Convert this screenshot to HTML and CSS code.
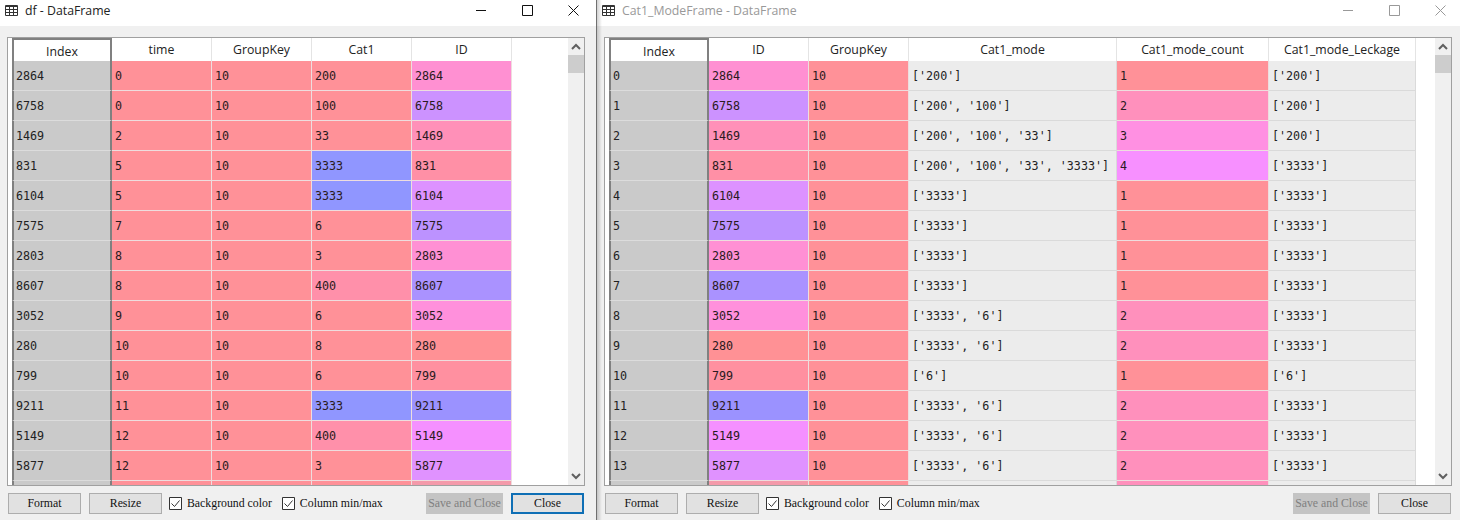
FILE: index.html
```html
<!DOCTYPE html>
<html lang="en">
<head>
    <meta charset="UTF-8">
    <title>DataFrame viewers</title>
    <link rel="stylesheet" href="styles.css">
</head>
<body>

    <div class="window window-df">
        <div class="titlebar">
            <svg class="app-icon" width="13" height="11" viewBox="0 0 13 11"><path d="M.5.5h12v10H.5zM.5 1.500h12M.5 4.500h12M.5 7.500h12M4.500 1v9M8.500 1v9" fill="none" stroke="#333"/></svg>
            <span class="title">df - DataFrame</span>
            <div class="controls">
                <span class="control"><svg width="10" height="10" viewBox="0 0 10 10"><path d="M0 5.500h10" stroke="currentColor"/></svg></span>
                <span class="control"><svg width="11" height="11" viewBox="0 0 11 11"><path d="M.5.5h10v10H.5z" fill="none" stroke="currentColor"/></svg></span>
                <span class="control"><svg width="11" height="11" viewBox="0 0 11 11"><path d="M.5.5l10 10M10.500.5l-10 10" fill="none" stroke="currentColor"/></svg></span>
            </div>
        </div>
        <div class="content">
            <div class="frame">
                <div class="grid">
                    <table>
                        <colgroup><col class="col-sm"><col class="col-sm"><col class="col-sm"><col class="col-sm"><col class="col-sm"></colgroup>
                        <thead><tr><th class="index">Index</th><th>time</th><th>GroupKey</th><th>Cat1</th><th>ID</th></tr></thead>
                        <tbody>
                            <tr><td class="index">2864</td><td class="red">0</td><td class="red">10</td><td class="red">200</td><td class="id-2864">2864</td></tr>
                            <tr><td class="index">6758</td><td class="red">0</td><td class="red">10</td><td class="red">100</td><td class="id-6758">6758</td></tr>
                            <tr><td class="index">1469</td><td class="red">2</td><td class="red">10</td><td class="red">33</td><td class="id-1469">1469</td></tr>
                            <tr><td class="index">831</td><td class="red">5</td><td class="red">10</td><td class="blue">3333</td><td class="id-831">831</td></tr>
                            <tr><td class="index">6104</td><td class="red">5</td><td class="red">10</td><td class="blue">3333</td><td class="id-6104">6104</td></tr>
                            <tr><td class="index">7575</td><td class="red">7</td><td class="red">10</td><td class="red">6</td><td class="id-7575">7575</td></tr>
                            <tr><td class="index">2803</td><td class="red">8</td><td class="red">10</td><td class="red">3</td><td class="id-2803">2803</td></tr>
                            <tr><td class="index">8607</td><td class="red">8</td><td class="red">10</td><td class="rose">400</td><td class="id-8607">8607</td></tr>
                            <tr><td class="index">3052</td><td class="red">9</td><td class="red">10</td><td class="red">6</td><td class="id-3052">3052</td></tr>
                            <tr><td class="index">280</td><td class="red">10</td><td class="red">10</td><td class="red">8</td><td class="id-280">280</td></tr>
                            <tr><td class="index">799</td><td class="red">10</td><td class="red">10</td><td class="red">6</td><td class="id-799">799</td></tr>
                            <tr><td class="index">9211</td><td class="red">11</td><td class="red">10</td><td class="blue">3333</td><td class="id-9211">9211</td></tr>
                            <tr><td class="index">5149</td><td class="red">12</td><td class="red">10</td><td class="rose">400</td><td class="id-5149">5149</td></tr>
                            <tr><td class="index">5877</td><td class="red">12</td><td class="red">10</td><td class="red">3</td><td class="id-5877">5877</td></tr>
                            <tr><td class="index"></td><td class="red"></td><td class="red"></td><td class="red"></td><td class="id-next"></td></tr>
                        </tbody>
                    </table>
                </div>
                <div class="scrollbar">
                    <svg width="16" height="17" viewBox="0 0 16 17"><path d="M4 11l4-4 4 4" fill="none" stroke="#606060" stroke-width="2"/></svg>
                    <div class="thumb"></div>
                    <svg class="arrow-down" width="16" height="17" viewBox="0 0 16 17"><path d="M4 6l4 4 4-4" fill="none" stroke="#606060" stroke-width="2"/></svg>
                </div>
            </div>
            <div class="actions">
                <button class="btn">Format</button>
                <button class="btn">Resize</button>
                <label class="check"><svg width="13" height="13" viewBox="0 0 13 13"><path d="M.5.5h12v12H.5z" fill="#fff" stroke="#333"/><path d="M2.500 6.500l3 3 5-6" fill="none" stroke="#333"/></svg>Background color</label>
                <label class="check"><svg width="13" height="13" viewBox="0 0 13 13"><path d="M.5.5h12v12H.5z" fill="#fff" stroke="#333"/><path d="M2.500 6.500l3 3 5-6" fill="none" stroke="#333"/></svg>Column min/max</label>
                <button class="btn btn-save" disabled>Save and Close</button>
                <button class="btn btn-focus">Close</button>
            </div>
        </div>
    </div>

    <div class="divider"></div>

    <div class="window window-mode">
        <div class="titlebar">
            <svg class="app-icon" width="13" height="11" viewBox="0 0 13 11"><path d="M.5.5h12v10H.5zM.5 1.500h12M.5 4.500h12M.5 7.500h12M4.500 1v9M8.500 1v9" fill="none" stroke="#333"/></svg>
            <span class="title">Cat1_ModeFrame - DataFrame</span>
            <div class="controls">
                <span class="control"><svg width="10" height="10" viewBox="0 0 10 10"><path d="M0 5.500h10" stroke="currentColor"/></svg></span>
                <span class="control"><svg width="11" height="11" viewBox="0 0 11 11"><path d="M.5.5h10v10H.5z" fill="none" stroke="currentColor"/></svg></span>
                <span class="control"><svg width="11" height="11" viewBox="0 0 11 11"><path d="M.5.5l10 10M10.500.5l-10 10" fill="none" stroke="currentColor"/></svg></span>
            </div>
        </div>
        <div class="content">
            <div class="frame">
                <div class="grid">
                    <table>
                        <colgroup><col class="col-sm"><col class="col-sm"><col class="col-sm"><col class="col-mode"><col class="col-count"><col class="col-leak"></colgroup>
                        <thead><tr><th class="index">Index</th><th>ID</th><th>GroupKey</th><th>Cat1_mode</th><th>Cat1_mode_count</th><th>Cat1_mode_Leckage</th></tr></thead>
                        <tbody>
                            <tr><td class="index">0</td><td class="id-2864">2864</td><td class="red">10</td><td class="gray">['200']</td><td class="red">1</td><td class="gray">['200']</td></tr>
                            <tr><td class="index">1</td><td class="id-6758">6758</td><td class="red">10</td><td class="gray">['200', '100']</td><td class="count-2">2</td><td class="gray">['200']</td></tr>
                            <tr><td class="index">2</td><td class="id-1469">1469</td><td class="red">10</td><td class="gray">['200', '100', '33']</td><td class="count-3">3</td><td class="gray">['200']</td></tr>
                            <tr><td class="index">3</td><td class="id-831">831</td><td class="red">10</td><td class="gray">['200', '100', '33', '3333']</td><td class="count-4">4</td><td class="gray">['3333']</td></tr>
                            <tr><td class="index">4</td><td class="id-6104">6104</td><td class="red">10</td><td class="gray">['3333']</td><td class="red">1</td><td class="gray">['3333']</td></tr>
                            <tr><td class="index">5</td><td class="id-7575">7575</td><td class="red">10</td><td class="gray">['3333']</td><td class="red">1</td><td class="gray">['3333']</td></tr>
                            <tr><td class="index">6</td><td class="id-2803">2803</td><td class="red">10</td><td class="gray">['3333']</td><td class="red">1</td><td class="gray">['3333']</td></tr>
                            <tr><td class="index">7</td><td class="id-8607">8607</td><td class="red">10</td><td class="gray">['3333']</td><td class="red">1</td><td class="gray">['3333']</td></tr>
                            <tr><td class="index">8</td><td class="id-3052">3052</td><td class="red">10</td><td class="gray">['3333', '6']</td><td class="count-2">2</td><td class="gray">['3333']</td></tr>
                            <tr><td class="index">9</td><td class="id-280">280</td><td class="red">10</td><td class="gray">['3333', '6']</td><td class="count-2">2</td><td class="gray">['3333']</td></tr>
                            <tr><td class="index">10</td><td class="id-799">799</td><td class="red">10</td><td class="gray">['6']</td><td class="red">1</td><td class="gray">['6']</td></tr>
                            <tr><td class="index">11</td><td class="id-9211">9211</td><td class="red">10</td><td class="gray">['3333', '6']</td><td class="count-2">2</td><td class="gray">['3333']</td></tr>
                            <tr><td class="index">12</td><td class="id-5149">5149</td><td class="red">10</td><td class="gray">['3333', '6']</td><td class="count-2">2</td><td class="gray">['3333']</td></tr>
                            <tr><td class="index">13</td><td class="id-5877">5877</td><td class="red">10</td><td class="gray">['3333', '6']</td><td class="count-2">2</td><td class="gray">['3333']</td></tr>
                            <tr><td class="index"></td><td class="id-next"></td><td class="red"></td><td class="gray"></td><td class="count-2"></td><td class="gray"></td></tr>
                        </tbody>
                    </table>
                </div>
                <div class="scrollbar">
                    <svg width="16" height="17" viewBox="0 0 16 17"><path d="M4 11l4-4 4 4" fill="none" stroke="#606060" stroke-width="2"/></svg>
                    <div class="thumb"></div>
                    <svg class="arrow-down" width="16" height="17" viewBox="0 0 16 17"><path d="M4 6l4 4 4-4" fill="none" stroke="#606060" stroke-width="2"/></svg>
                </div>
            </div>
            <div class="actions">
                <button class="btn">Format</button>
                <button class="btn">Resize</button>
                <label class="check"><svg width="13" height="13" viewBox="0 0 13 13"><path d="M.5.5h12v12H.5z" fill="#fff" stroke="#333"/><path d="M2.500 6.500l3 3 5-6" fill="none" stroke="#333"/></svg>Background color</label>
                <label class="check"><svg width="13" height="13" viewBox="0 0 13 13"><path d="M.5.5h12v12H.5z" fill="#fff" stroke="#333"/><path d="M2.500 6.500l3 3 5-6" fill="none" stroke="#333"/></svg>Column min/max</label>
                <button class="btn btn-save" disabled>Save and Close</button>
                <button class="btn">Close</button>
            </div>
        </div>
    </div>

</body>
</html>
```

FILE: styles.css
```css
html, body {
    margin: 0;
    height: 100%;
    overflow: hidden;
}
body {
    display: flex;
    background-color: #f0f0f0;
    font-family: "Open Sans", sans-serif;
    color: #222;
}
.window {
    display: flex;
    flex-direction: column;
    height: 520px;
}
.window-df {
    width: 596px;
    flex: none;
}
.window-mode {
    flex: 1;
    min-width: 0;
}
.divider {
    position: relative;
    width: 1px;
    flex: none;
    background-color: #707070;
}
.divider::after {
    content: "";
    position: absolute;
    top: 0;
    bottom: 0;
    left: 1px;
    width: 5px;
    background: linear-gradient(to right, rgba(0, 0, 0, 0.18), rgba(0, 0, 0, 0));
}

/* title bar */
.titlebar {
    display: flex;
    align-items: center;
    height: 26px;
    padding: 0 0 6px 5px;
    box-sizing: border-box;
    background-color: white;
    font-size: 12.3px;
    flex: none;
}
.app-icon {
    margin-right: 7px;
    flex: none;
}
.title {
    flex: 1;
    color: #222;
}
.controls {
    display: flex;
    color: #111;
}
.control {
    display: flex;
    justify-content: center;
    align-items: center;
    width: 46px;
    height: 20px;
}
.window-mode .title {
    color: #999;
}
.window-mode .controls {
    margin-right: -3px;
    color: #999;
}

/* table area */
.content {
    display: flex;
    flex-direction: column;
    flex: 1;
    min-height: 0;
    padding-top: 11px;
}
.window-df .content {
    padding-left: 7px;
    padding-right: 11px;
}
.window-mode .content {
    padding-left: 7px;
    padding-right: 8px;
}
.frame {
    display: flex;
    height: 449px;
    border: 1px solid #a0a0a0;
    background-color: white;
    box-sizing: border-box;
    flex: none;
}
.grid {
    flex: 1;
    min-width: 0;
    padding-left: 4px;
    overflow: hidden;
}
table {
    border-collapse: separate;
    border-spacing: 0;
    table-layout: fixed;
    width: max-content;
}
.col-sm { width: 100px; }
.col-mode { width: 208px; }
.col-count { width: 152px; }
.col-leak { width: 147px; }

th {
    height: 23px;
    padding: 0;
    box-sizing: border-box;
    border-right: 1px solid #e4e4e4;
    font-size: 12.3px;
    font-weight: normal;
    text-align: center;
    color: #222;
}
td {
    height: 30px;
    padding: 0 0 0 3px;
    box-sizing: border-box;
    border-right: 1px solid #eeddde;
    border-bottom: 1px solid #eeddde;
    font-family: "DejaVu Sans Mono", monospace;
    font-size: 11.7px;
    color: #2a1a20;
    white-space: pre;
}
th.index {
    border: 2px solid #808080;
    border-bottom: none;
    padding-top: 2px;
}
td.index {
    padding: 1px 0 0 2px;
    border-left: 2px solid #808080;
    border-right: 2px solid #808080;
    border-bottom-color: #dcdcdc;
    background-color: #cacaca;
    color: #222;
}
td.gray {
    background-color: #ececec;
    border-color: #dadada;
    color: #222;
}

/* cell shades, one per value */
.red { background-color: #ff9198; }
.rose { background-color: #ff90aa; }
.blue { background-color: #9096ff; }
.count-2 { background-color: #ff90bc; }
.count-3 { background-color: #ff90e2; }
.count-4 { background-color: #f790ff; }
.id-2864 { background-color: #ff90d2; }
.id-6758 { background-color: #cc92ff; }
.id-1469 { background-color: #ff90b8; }
.id-831 { background-color: #ff90a6; }
.id-6104 { background-color: #dd92ff; }
.id-7575 { background-color: #bc92ff; }
.id-2803 { background-color: #ff90d4; }
.id-8607 { background-color: #aa92ff; }
.id-3052 { background-color: #ff90dc; }
.id-280 { background-color: #ff9195; }
.id-799 { background-color: #ff90a0; }
.id-9211 { background-color: #9b92ff; }
.id-5149 { background-color: #f590ff; }
.id-5877 { background-color: #e092ff; }
.id-next { background-color: #f49aaa; }

/* scrollbar */
.scrollbar {
    display: flex;
    flex-direction: column;
    width: 16px;
    flex: none;
    background-color: #f0f0f0;
}
.thumb {
    height: 18px;
    background-color: #cdcdcd;
}
.arrow-down {
    margin-top: auto;
}

/* bottom buttons */
.actions {
    display: flex;
    align-items: center;
    gap: 8px;
    margin: 7px 1px 0;
    font-family: "Liberation Serif", serif;
    font-size: 11.8px;
}
.btn {
    width: 73px;
    height: 21px;
    padding: 0;
    border: 1px solid #adadad;
    background-color: #e1e1e1;
    font-family: inherit;
    font-size: inherit;
    color: #111;
}
.btn-save {
    width: 77px;
    margin-left: auto;
    background-color: #c4c4c4;
    border-color: #c4c4c4;
    color: #808080;
}
.btn-focus {
    border: 2px solid #0f6fb5;
}
.check {
    display: flex;
    align-items: center;
    gap: 5px;
    margin: 0 3px 0 -1px;
    color: #111;
}
```
